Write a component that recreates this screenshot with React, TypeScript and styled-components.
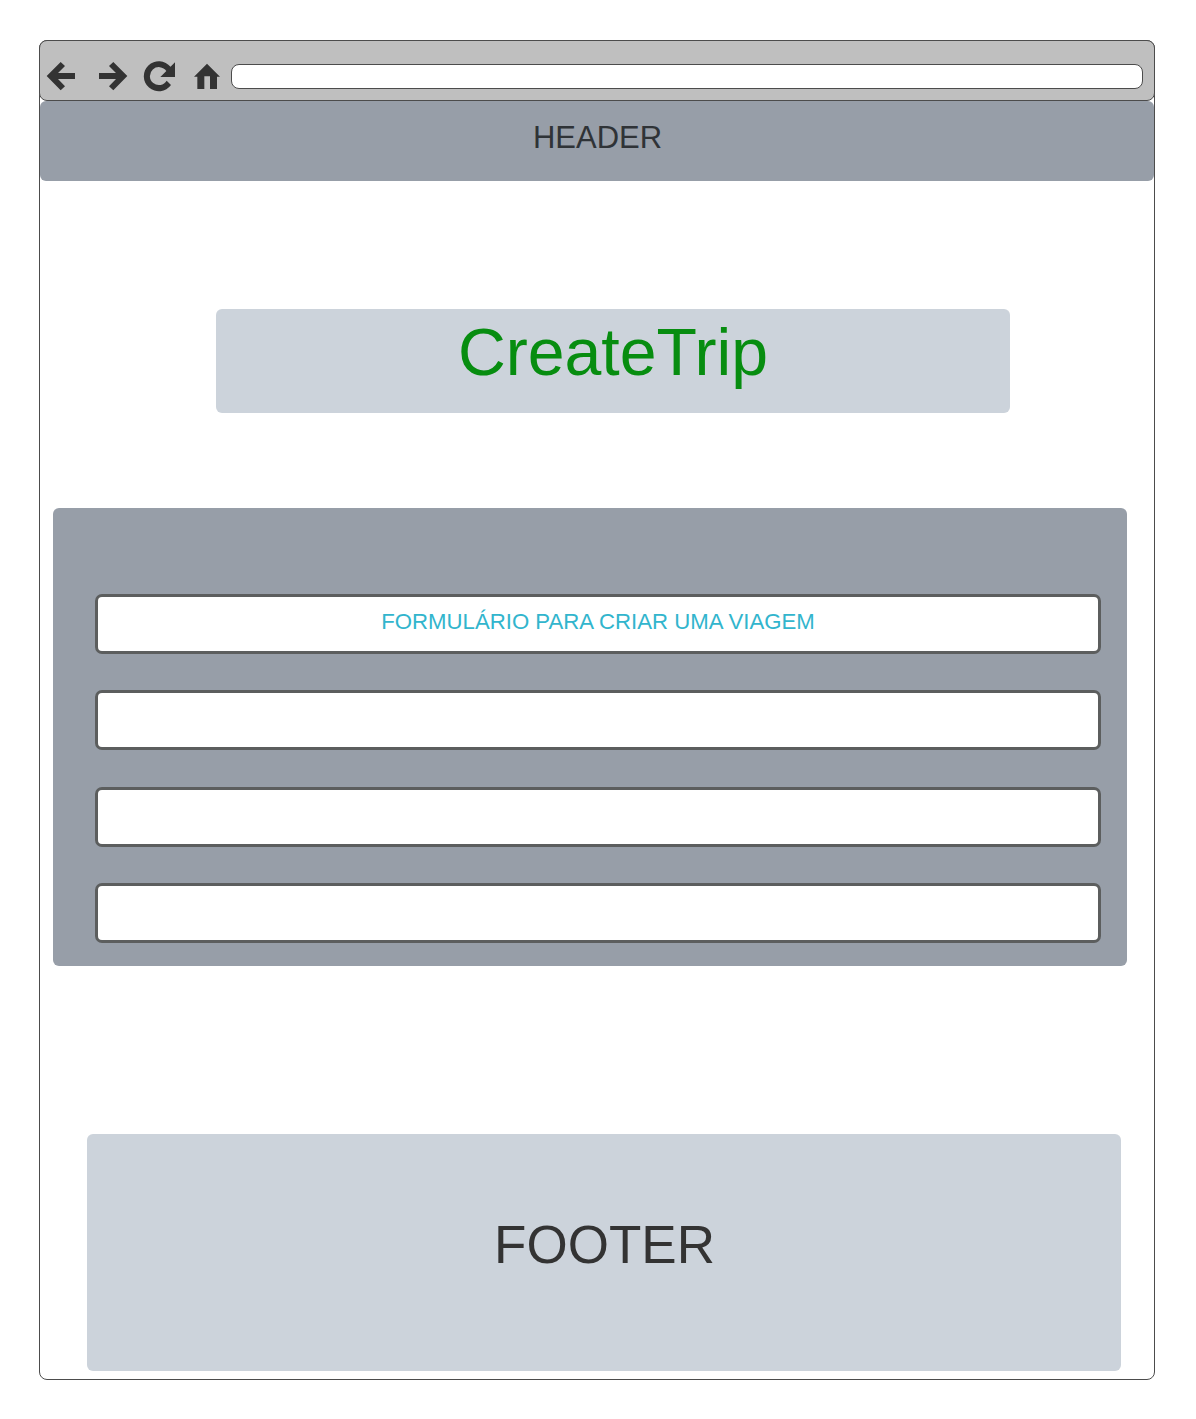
import React from "react";
import styled, { createGlobalStyle } from "styled-components";

const GlobalStyle = createGlobalStyle`
  *, *::before, *::after { box-sizing: border-box; }
  body {
    margin: 0;
    background: #ffffff;
    font-family: "Liberation Sans", Arial, sans-serif;
  }
`;

const Page = styled.div`
  height: 1419px;
  padding: 40px 41px 39px 39px;
`;

const BrowserWindow = styled.div`
  display: flex;
  flex-direction: column;
  width: 1116px;
  height: 1340px;
  border: 1px solid #4c4c4c;
  border-radius: 8px;
`;

const Toolbar = styled.div`
  display: flex;
  align-items: flex-start;
  flex: none;
  height: 61px;
  margin: -1px -1px 0;
  padding: 19px 11px 0 6px;
  background: #bfbfbf;
  border: 1px solid #4c4c4c;
  border-radius: 8px;
`;

const ToolIcon = styled.svg<{ $gap: number }>`
  display: block;
  flex: none;
  height: 32px;
  margin-right: ${(p) => p.$gap}px;
  fill: #333333;
`;

const AddressBar = styled.div`
  flex: 1;
  height: 25px;
  margin-top: 4px;
  background: #ffffff;
  border: 1px solid #4c4c4c;
  border-radius: 8px;
`;

const Header = styled.header`
  display: flex;
  justify-content: center;
  flex: none;
  height: 80px;
  padding: 19px 0 0 1px;
  background: #979ea8;
  border-radius: 6px;
  color: #2f3337;
  font-size: 31px;
  line-height: 36px;
`;

const Title = styled.h1`
  display: flex;
  justify-content: center;
  flex: none;
  width: 794px;
  height: 104px;
  margin: 128px 0 0 176px;
  padding-top: 5px;
  background: #ccd3db;
  border-radius: 6px;
  color: #078d10;
  font-size: 66.2px;
  font-weight: 400;
  line-height: 76px;
`;

const FormPanel = styled.main`
  display: flex;
  flex-direction: column;
  flex: none;
  width: 1074px;
  height: 458px;
  margin: 95px 0 0 13px;
  padding: 86px 26px 0 42px;
  background: #979ea8;
  border-radius: 6px;
`;

const Field = styled.div<{ $gap: number }>`
  display: flex;
  justify-content: center;
  flex: none;
  height: 60px;
  margin-bottom: ${(p) => p.$gap}px;
  padding-top: 12px;
  background: #ffffff;
  border: 3px solid #5c5e5e;
  border-radius: 7px;
  color: #32b5cd;
  font-size: 22.2px;
  line-height: 26px;
`;

const Footer = styled.footer`
  display: flex;
  justify-content: center;
  flex: none;
  width: 1034px;
  height: 237px;
  margin: 168px 0 0 47px;
  padding: 81px 0 0 1px;
  background: #ccd3db;
  border-radius: 6px;
  color: #333333;
  font-size: 53px;
  line-height: 60px;
`;

const fields = [
  { label: "FORMULÁRIO PARA CRIAR UMA VIAGEM", gap: 36 },
  { label: "", gap: 37 },
  { label: "", gap: 36 },
  { label: "", gap: 0 },
];

export default function App() {
  return (
    <>
      <GlobalStyle />
      <Page>
        <BrowserWindow>
          <Toolbar>
            <ToolIcon $gap={22} width="30" viewBox="48 90 90 96">
              <path d="M50 138 L92 96 L105 108 L84 129 H135 V147 H84 L105 169 L92 181 Z" />
            </ToolIcon>
            <ToolIcon $gap={15} width="30" viewBox="204 90 90 96">
              <path d="M292 138 L250 96 L237 108 L258 129 H207 V147 H258 L237 169 L250 181 Z" />
            </ToolIcon>
            <ToolIcon $gap={16} width="34" viewBox="339 90 102 96">
              <path d="M435 97 V141 H391 L409 123 A27 27 0 1 0 410 152 L423 165 A45 45 0 1 1 421.5 110.5 Z" />
            </ToolIcon>
            <ToolIcon $gap={10} width="28" viewBox="489 90 84 96">
              <path d="M531 101 L570 140 H561 V177 H540 V139 H523 V177 H502 V140 H492 Z" />
            </ToolIcon>
            <AddressBar />
          </Toolbar>
          <Header>HEADER</Header>
          <Title>CreateTrip</Title>
          <FormPanel>
            {fields.map((field, i) => (
              <Field key={i} $gap={field.gap}>
                {field.label}
              </Field>
            ))}
          </FormPanel>
          <Footer>FOOTER</Footer>
        </BrowserWindow>
      </Page>
    </>
  );
}
